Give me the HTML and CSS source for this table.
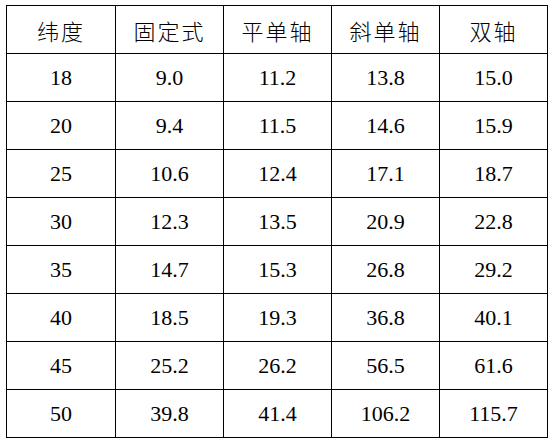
FILE: index.html
```html
<!DOCTYPE html>
<html>
<head>
<meta charset="utf-8">
<link rel="stylesheet" href="styles.css">
</head>
<body>
<table class="data">
  <colgroup>
    <col class="c1"><col class="c"><col class="c"><col class="c"><col class="c"><col class="c">
  </colgroup>
  <tr class="head"><td>纬度</td><td>固定式</td><td>平单轴</td><td>斜单轴</td><td>双轴</td></tr>
  <tr><td>18</td><td>9.0</td><td>11.2</td><td>13.8</td><td>15.0</td></tr>
  <tr><td>20</td><td>9.4</td><td>11.5</td><td>14.6</td><td>15.9</td></tr>
  <tr><td>25</td><td>10.6</td><td>12.4</td><td>17.1</td><td>18.7</td></tr>
  <tr><td>30</td><td>12.3</td><td>13.5</td><td>20.9</td><td>22.8</td></tr>
  <tr><td>35</td><td>14.7</td><td>15.3</td><td>26.8</td><td>29.2</td></tr>
  <tr><td>40</td><td>18.5</td><td>19.3</td><td>36.8</td><td>40.1</td></tr>
  <tr><td>45</td><td>25.2</td><td>26.2</td><td>56.5</td><td>61.6</td></tr>
  <tr><td>50</td><td>39.8</td><td>41.4</td><td>106.2</td><td>115.7</td></tr>
</table>
</body>
</html>
```
FILE: styles.css
```css
html, body {
  margin: 0;
  padding: 0;
  background: #fff;
}
table.data {
  margin: 5px 0 0 6px;
  border-collapse: collapse;
  table-layout: fixed;
  width: 541px;
  color: #000;
  font-family: "Liberation Serif", serif;
  font-size: 22px;
}
table.data td {
  border: 1px solid #000;
  text-align: center;
  vertical-align: middle;
  padding: 0;
  height: 47px;
  font-family: "Liberation Serif", serif;
  font-size: 22px;
}
table.data tr.head td {
  font-family: "Noto Sans CJK SC", sans-serif;
  font-size: 22px;
  font-weight: 300;
  letter-spacing: 2px;
}
col.c1 { width: 109px; }
col.c { width: 108px; }
```
